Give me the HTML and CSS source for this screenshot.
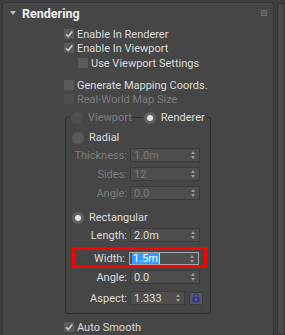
FILE: index.html
```html
<!DOCTYPE html>
<html lang="en">
    <head>
        <meta charset="UTF-8">
        <title>Rendering rollout</title>
        <link rel="stylesheet" href="styles.css">
    </head>
    <body>
        <div class="screen">
            <div class="panel">
                <div class="head">
                    <span class="tri"></span>
                    <span class="title">Rendering</span>
                    <svg class="grip" width="6" height="6" viewBox="0 0 6 6">
                        <g fill="#8a8a8a">
                            <rect x="0" y="0" width="1.4" height="1.4"/><rect x="2.3" y="0" width="1.4" height="1.4"/><rect x="4.6" y="0" width="1.4" height="1.4"/>
                            <rect x="0" y="2.3" width="1.4" height="1.4"/><rect x="2.3" y="2.3" width="1.4" height="1.4"/><rect x="4.6" y="2.3" width="1.4" height="1.4"/>
                            <rect x="0" y="4.6" width="1.4" height="1.4"/><rect x="2.3" y="4.6" width="1.4" height="1.4"/><rect x="4.6" y="4.6" width="1.4" height="1.4"/>
                        </g>
                    </svg>
                </div>

                <div class="content">
                    <div class="row"><span class="box"><svg viewBox="0 0 10 10"><path d="M2 5.2 L4.2 7.6 L8.3 2.4" fill="none" stroke="#c9c9c9" stroke-width="1.6"/></svg></span>Enable In Renderer</div>
                    <div class="row"><span class="box"><svg viewBox="0 0 10 10"><path d="M2 5.2 L4.2 7.6 L8.3 2.4" fill="none" stroke="#c9c9c9" stroke-width="1.6"/></svg></span>Enable In Viewport</div>
                    <div class="row sub"><span class="box"></span>Use Viewport Settings</div>
                    <div class="row gap"><span class="box"></span>Generate Mapping Coords.</div>
                    <div class="row off"><span class="box"></span>Real-World Map Size</div>

                    <div class="group">
                        <div class="legend">
                            <span class="opt off"><span class="radio"></span>Viewport</span>
                            <span class="opt"><span class="radio on"></span>Renderer</span>
                        </div>

                        <div class="opt solo"><span class="radio"></span>Radial</div>
                        <div class="spin off first"><span class="lbl">Thickness:</span><span class="field">1.0m<i class="arrows"></i></span></div>
                        <div class="spin off"><span class="lbl">Sides:</span><span class="field">12<i class="arrows"></i></span></div>
                        <div class="spin off"><span class="lbl">Angle:</span><span class="field">0.0<i class="arrows"></i></span></div>

                        <div class="opt solo rect"><span class="radio on"></span>Rectangular</div>
                        <div class="spin first"><span class="lbl">Length:</span><span class="field">2.0m<i class="arrows"></i></span></div>
                        <div class="spin mark"><span class="lbl">Width:</span><span class="field focus"><span class="sel">1.5m</span><span class="caret"></span><i class="arrows"></i></span></div>
                        <div class="spin tight"><span class="lbl">Angle:</span><span class="field">0.0<i class="arrows"></i></span></div>
                        <div class="spin aspect"><span class="lbl">Aspect:</span><span class="field short">1.333<i class="arrows"></i></span>
                            <span class="lock">
                                <svg width="8" height="10" viewBox="0 0 8 10">
                                    <path d="M2 4.2 V2.8 a2 2 0 0 1 4 0 V4.2" fill="none" stroke="#34388f" stroke-width="1.3"/>
                                    <rect x="0.5" y="4" width="7" height="5.5" rx="1" fill="#34388f"/>
                                    <rect x="3.4" y="5.6" width="1.2" height="2" fill="#8c8fc4"/>
                                </svg>
                            </span>
                        </div>
                    </div>

                    <div class="row smooth"><span class="box"><svg viewBox="0 0 10 10"><path d="M2 5.2 L4.2 7.6 L8.3 2.4" fill="none" stroke="#c9c9c9" stroke-width="1.6"/></svg></span>Auto Smooth</div>
                </div>
            </div>
            <div class="scroll"></div>
        </div>
    </body>
</html>
```
FILE: styles.css
```css
* {
    margin: 0; padding: 0; box-sizing: border-box;
}

html, body {
    width: 100%;
    height: 100%;
    background-color: #3d3d3d;
    color: #dcdcdc;
    font-family: Roboto, sans-serif;
    font-size: 11px;
    line-height: 13px;
    overflow: hidden;
}

.screen {
    display: flex;
    height: 100%;
    padding-top: 2px;
}

.panel {
    width: 272px;
    margin-left: 2px;
    background-color: #464646;
    border: 1px solid #353535;
    border-bottom: none;
    border-radius: 3px 3px 0 0;
}

.scroll {
    width: 8px;
    margin-left: 3px;
    margin-top: 1px;
    background-color: #4a4a4a;
    border: 1px solid #333;
    border-radius: 2px;
}

.head {
    display: flex;
    align-items: center;
    height: 20px;
    padding-left: 7px;
    padding-right: 6px;
}

.tri {
    width: 0;
    height: 0;
    border-left: 3px solid transparent;
    border-right: 3px solid transparent;
    border-top: 4px solid #bdbdbd;
    margin-right: 6px;
}

.title {
    font-weight: bold;
    font-size: 12.5px;
    color: #ececec;
}

.grip {
    margin-left: auto;
}

.content {
    padding-top: 4px;
    padding-left: 61px;
}

.row {
    display: flex;
    align-items: center;
    height: 14px;
}

.row.sub {
    padding-left: 14px;
    margin-top: 1px;
}

.row.gap {
    margin-top: 8px;
}

.row.off {
    color: #7c7c7c;
}

.box {
    width: 10px;
    height: 10px;
    background-color: #5b5b5b;
    margin-right: 3px;
    display: flex;
}

.row.off .box {
    background-color: #4f4f4f;
}

.box svg {
    width: 10px;
    height: 10px;
}

.group {
    width: 146px;
    margin-left: 1px;
    margin-top: 11px;
    border: 1px solid #2f2f2f;
    border-radius: 2px;
    padding-bottom: 8px;
}

.legend {
    display: flex;
    gap: 10px;
    margin-top: -7px;
    margin-left: 4px;
    height: 13px;
}

.legend .opt {
    background-color: #464646;
    padding: 0 1px;
}

.opt {
    display: flex;
    align-items: center;
    height: 13px;
}

.opt.off {
    color: #7c7c7c;
}

.opt.solo {
    margin-left: 6px;
    margin-top: 7px;
}

.opt.rect {
    margin-top: 11px;
}

.radio {
    width: 12px;
    height: 12px;
    border-radius: 50%;
    background-color: #5a5a5a;
    margin-right: 5px;
    display: flex;
    align-items: center;
    justify-content: center;
}

.opt.off .radio {
    background-color: #4f4f4f;
}

.radio.on {
    background-color: #626262;
}

.radio.on::after {
    content: "";
    width: 6px;
    height: 6px;
    border-radius: 50%;
    background-color: #e2e2e2;
}

.spin {
    display: flex;
    align-items: center;
    gap: 3px;
    height: 14px;
    margin-top: 5px;
}

.spin.first {
    margin-top: 4px;
}

.spin.off {
    color: #7c7c7c;
}

.lbl {
    width: 61px;
    text-align: right;
}

.field {
    width: 70px;
    height: 14px;
    display: flex;
    align-items: center;
    padding-left: 3px;
    background-color: #4e4e4e;
    border: 1px solid #3a3a3a;
}

.field.short {
    width: 55px;
}

.arrows {
    margin-left: auto;
    margin-right: 3px;
    width: 5px;
    height: 8px;
    position: relative;
}

.arrows::before, .arrows::after {
    content: "";
    position: absolute;
    left: 0;
    border-left: 2.5px solid transparent;
    border-right: 2.5px solid transparent;
}

.arrows::before {
    top: 0;
    border-bottom: 3px solid #9a9a9a;
}

.arrows::after {
    bottom: 0;
    border-top: 3px solid #9a9a9a;
}

.spin.mark {
    width: 135px;
    height: 21px;
    margin-left: 6px;
    border: 3px solid #ff0000;
    padding-top: 2px;
    align-items: flex-start;
    gap: 4px;
}

.spin.mark .lbl {
    width: 50px;
}

.field.focus {
    height: 13px;
    border-color: #a8a8a8;
    padding-left: 2px;
}

.sel {
    background-color: #3399ff;
    color: #fff;
    padding: 0 1px;
    line-height: 11px;
}

.caret {
    width: 1px;
    height: 11px;
    background-color: #dcdcdc;
}

.spin.tight {
    margin-top: 2px;
}

.spin.aspect {
    margin-top: 7px;
}

.lock {
    width: 14px;
    height: 13px;
    margin-left: 1px;
    background-color: #565a66;
    border: 1px solid #3a3a3a;
    border-radius: 2px;
    display: flex;
    align-items: center;
    justify-content: center;
}

.row.smooth {
    margin-top: 6px;
}
```
